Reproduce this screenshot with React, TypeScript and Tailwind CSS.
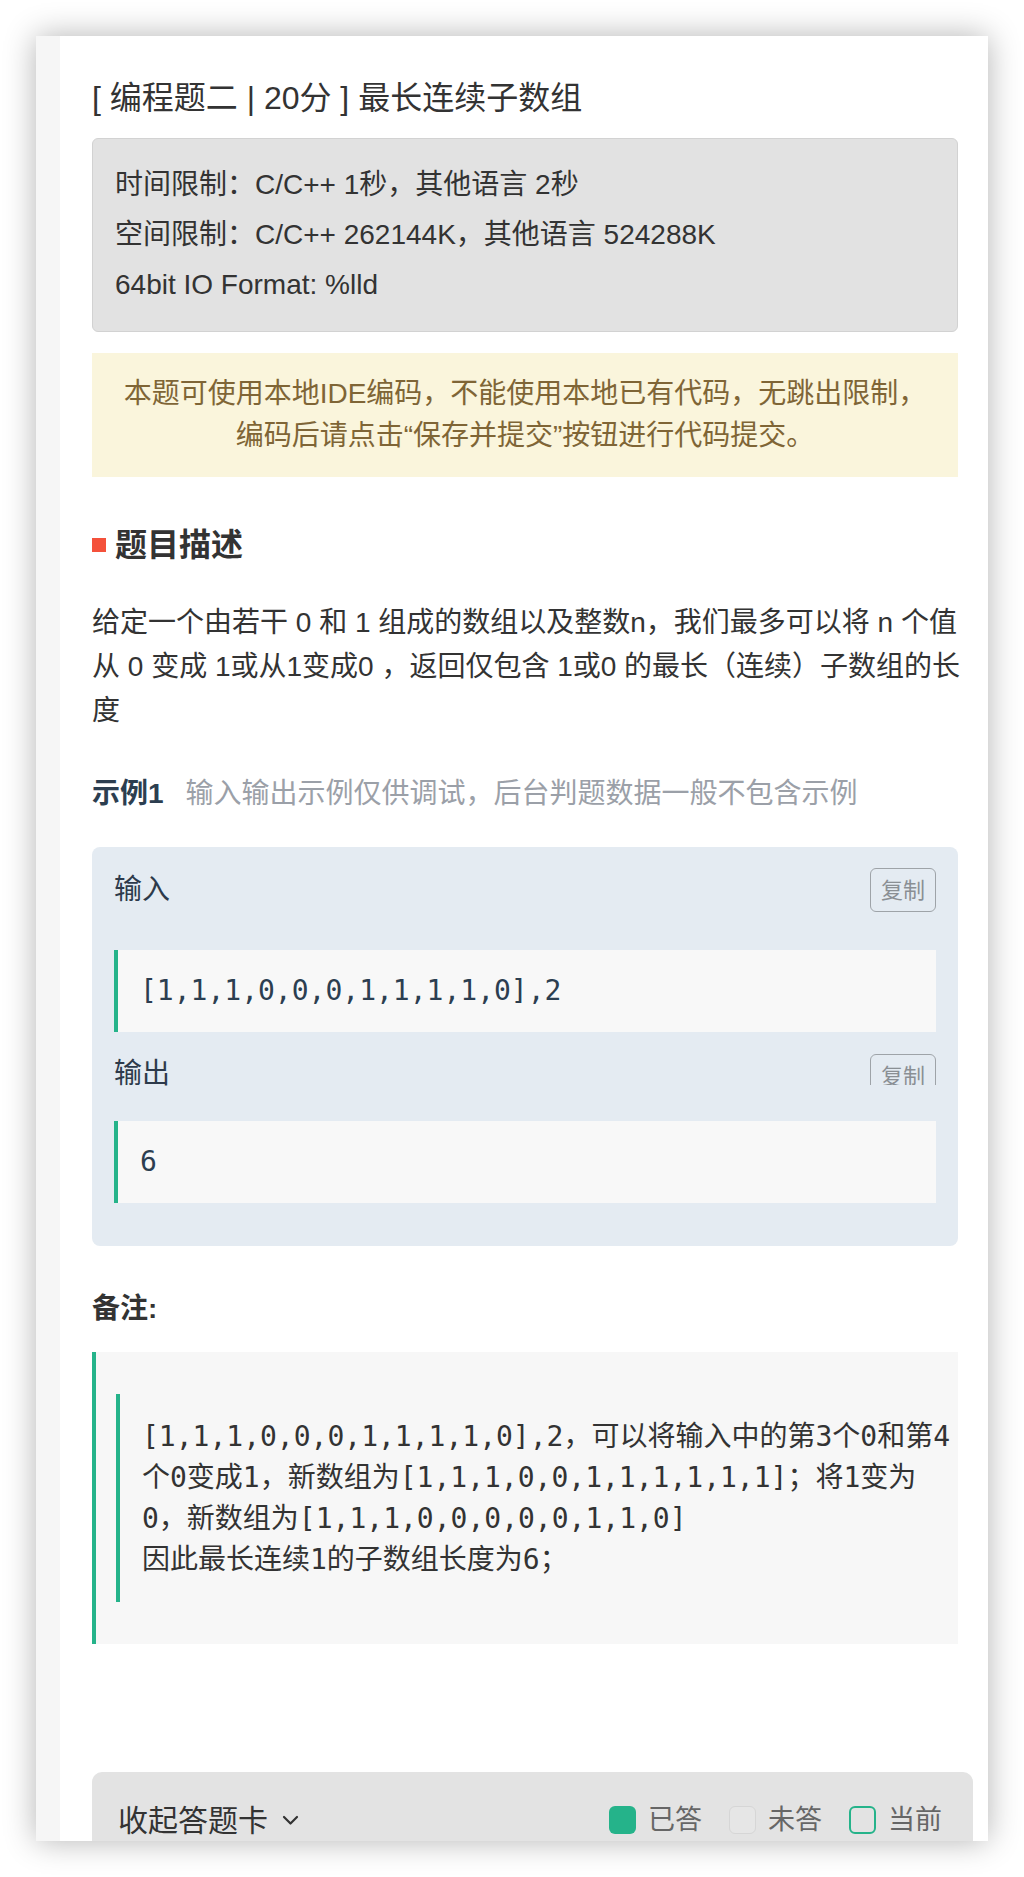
import React from "react";

const sans = "font-['Liberation_Sans','Noto_Sans_CJK_SC',sans-serif]";
const mono = "font-['DejaVu_Sans_Mono','Noto_Sans_CJK_SC',monospace]";

const CopyButton = () => (
  <span className="inline-flex h-[44px] items-center rounded-[6px] border-[1.5px] border-[#9ea3a8] px-[10px] text-[22px] text-[#8a8f94]">
    复制
  </span>
);

const Legend = ({ box, label }: { box: string; label: string }) => (
  <div className="flex items-center">
    <span className={`h-[28px] w-[27px] rounded-[6px] ${box}`} />
    <span className="ml-[12px] text-[27px] text-[#666]">{label}</span>
  </div>
);

const App = () => {
  return (
    <div className={`min-h-[1877px] bg-white pt-[36px] ${sans}`}>
      <div className="mx-[36px] flex h-[1805px] overflow-hidden bg-white shadow-[0_0_30px_rgba(0,0,0,0.3)]">
        <div className="w-[24px] shrink-0 bg-[#f6f6f6]" />
        <div className="min-w-0 flex-1 pl-[32px] pr-[30px] pt-[40px] text-[#333]">
          <h1 className="text-[32px] leading-[44px]">[ 编程题二 | 20分 ] 最长连续子数组</h1>

          <div className="mt-[18px] rounded-[6px] border border-[#d2d2d2] bg-[#e2e2e2] px-[22px] py-[21px] text-[28px] leading-[50px]">
            <p>时间限制：C/C++ 1秒，其他语言 2秒</p>
            <p>空间限制：C/C++ 262144K，其他语言 524288K</p>
            <p>64bit IO Format: %lld</p>
          </div>

          <div className="mt-[21px] bg-[#faf5dc] py-[20px] text-center text-[28px] leading-[42px] text-[#7f6536]">
            本题可使用本地IDE编码，不能使用本地已有代码，无跳出限制，
            <br />
            编码后请点击“保存并提交”按钮进行代码提交。
          </div>

          <div className="mt-[46px] flex items-center">
            <span className="h-[14px] w-[14px] bg-[#f4513b]" />
            <h2 className="ml-[9px] text-[32px] font-bold leading-[44px]">题目描述</h2>
          </div>

          <p className="mt-[34px] whitespace-nowrap text-[28px] leading-[44px]">
            给定一个由若干 0 和 1 组成的数组以及整数n，我们最多可以将 n 个值
            <br />
            从 0 变成 1或从1变成0 ，返回仅包含 1或0 的最长（连续）子数组的长
            <br />度
          </p>

          <div className="mt-[39px] flex items-center text-[28px] leading-[44px]">
            <span className="font-bold text-[#2c3e50]">示例1</span>
            <span className="ml-[22px] text-[#9ba0a8]">输入输出示例仅供调试，后台判题数据一般不包含示例</span>
          </div>

          <div className="mt-[31px] rounded-[8px] bg-[#e4ebf2] px-[22px] pb-[43px] pt-[21px]">
            <div className="flex h-[44px] items-center justify-between">
              <span className="text-[28px] text-[#2d3a4b]">输入</span>
              <CopyButton />
            </div>
            <div className={`mt-[38px] border-l-4 border-[#25b38a] bg-[#f8f8f8] px-[22px] py-[20px] text-[28px] leading-[42px] text-[#2c3e50] ${mono}`}>
              [1,1,1,0,0,0,1,1,1,1,0],2
            </div>
            <div className="mt-[22px] flex items-start justify-between">
              <span className="text-[28px] leading-[40px] text-[#2d3a4b]">输出</span>
              <div className="h-[31px] overflow-hidden">
                <CopyButton />
              </div>
            </div>
            <div className={`mt-[27px] border-l-4 border-[#25b38a] bg-[#f8f8f8] px-[22px] py-[20px] text-[28px] leading-[42px] text-[#2c3e50] ${mono}`}>
              6
            </div>
          </div>

          <h3 className="mt-[41px] text-[28px] font-bold leading-[44px]">备注:</h3>

          <div className="mt-[21px] border-l-4 border-[#25b38a] bg-[#f7f7f7] py-[42px] pl-[20px]">
            <div className={`whitespace-nowrap border-l-4 border-[#25b38a] py-[22px] pl-[22px] text-[28px] leading-[41px] text-[#333] ${mono}`}>
              [1,1,1,0,0,0,1,1,1,1,0],2，可以将输入中的第3个0和第4
              <br />
              个0变成1，新数组为[1,1,1,0,0,1,1,1,1,1,1]；将1变为
              <br />
              0，新数组为[1,1,1,0,0,0,0,0,1,1,0]
              <br />
              因此最长连续1的子数组长度为6；
            </div>
          </div>

          <div className="mr-[-15px] mt-[128px] flex h-[96px] items-center justify-between rounded-t-[10px] bg-[#e3e3e3] pl-[26px] pr-[31px]">
            <div className="flex items-center">
              <span className="text-[30px] text-[#333]">收起答题卡</span>
              <svg className="ml-[14px]" width="17" height="11" viewBox="0 0 17 11" fill="none">
                <polyline points="2,2 8.5,8.5 15,2" stroke="#333" strokeWidth="2.2" strokeLinecap="round" strokeLinejoin="round" />
              </svg>
            </div>
            <div className="flex items-center gap-[27px]">
              <Legend box="bg-[#25b38a]" label="已答" />
              <Legend box="border border-[#d6d6d6] bg-[#e6e6e6]" label="未答" />
              <Legend box="border-2 border-[#25b38a]" label="当前" />
            </div>
          </div>
        </div>
      </div>
    </div>
  );
};

export default App;
